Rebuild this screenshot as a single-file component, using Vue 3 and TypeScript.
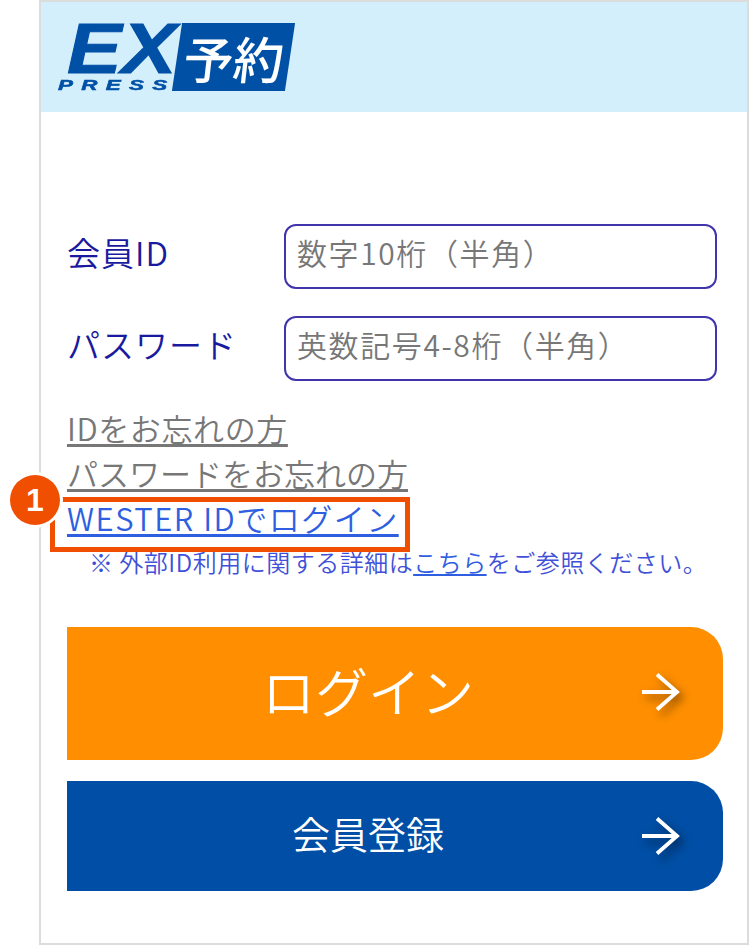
<script setup lang="ts">
// ログイン画面の入力欄
const fields = [
  { label: '会員ID', placeholder: '数字10桁（半角）' },
  { label: 'パスワード', placeholder: '英数記号4-8桁（半角）' },
]
</script>

<template>
  <div class="page">
    <div class="frame">
      <header class="header">
        <div class="logo">
          <div class="logo-ex">
            <span class="ex">EX</span>
            <span class="press">PRESS</span>
          </div>
          <div class="logo-plate"><span>予約</span></div>
        </div>
      </header>

      <main class="body">
        <div class="fields">
          <div v-for="f in fields" :key="f.label" class="field">
            <label class="label">{{ f.label }}</label>
            <input class="input" type="text" :placeholder="f.placeholder" />
          </div>
        </div>

        <div class="links">
          <a class="link gray id-link">IDをお忘れの方</a>
          <a class="link gray">パスワードをお忘れの方</a>
          <div class="wester">
            <a class="link blue">WESTER IDでログイン</a>
            <span class="highlight"></span>
            <span class="badge">1</span>
          </div>
          <p class="note">※ 外部ID利用に関する詳細は<a class="note-link">こちら</a>をご参照ください。</p>
        </div>

        <div class="buttons">
          <button class="btn login">
            <span>ログイン</span>
            <svg class="arrow" viewBox="0 0 40 40" fill="none">
              <path d="M0 20H36M15 2.5L35 20L15 37.5" stroke="#fff" stroke-width="3.8" />
            </svg>
          </button>
          <button class="btn register">
            <span>会員登録</span>
            <svg class="arrow" viewBox="0 0 40 40" fill="none">
              <path d="M0 20H36M15 2.5L35 20L15 37.5" stroke="#fff" stroke-width="3.8" />
            </svg>
          </button>
        </div>
      </main>
    </div>
  </div>
</template>

<style>
html,
body {
  margin: 0;
  background: #fff;
}
</style>

<style scoped>
.page {
  width: 750px;
  height: 946px;
  padding-left: 39px;
  box-sizing: border-box;
  font-family: "Noto Sans CJK JP", "Liberation Sans", sans-serif;
  overflow: hidden;
}

.frame {
  width: 710px;
  height: 945px;
  box-sizing: border-box;
  border: 2px solid #dcdcdc;
  background: #fff;
}

/* ヘッダー */
.header {
  height: 110px;
  background: #d4effc;
  padding: 21px 0 0 17px;
  box-sizing: border-box;
}

.logo {
  display: flex;
  height: 68px;
  color: #0050a6;
}

.logo-ex {
  width: 119px;
  height: 68px;
}

.ex {
  display: block;
  font: italic 700 70px/52px "Liberation Sans", sans-serif;
  -webkit-text-stroke: 1px #0050a6;
  transform: scaleX(1.17);
  transform-origin: left top;
  margin-left: 9px;
}

.press {
  display: block;
  margin-top: 3px;
  font: italic 700 14px/14px "Liberation Sans", sans-serif;
  letter-spacing: 5.2px;
  -webkit-text-stroke: 0.5px #0050a6;
  transform: scaleX(1.6);
  transform-origin: left top;
  white-space: nowrap;
}

.logo-plate {
  width: 113px;
  height: 68px;
  background: #0050a6;
  transform: skewX(-8.5deg);
  color: #fff;
  display: flex;
  align-items: center;
  justify-content: center;
}

.logo-plate span {
  font-size: 50px;
  line-height: 1;
  font-weight: 500;
  transform: skewX(2deg);
}

/* 本体 */
.body {
  padding: 112px 25px 0 26px;
}

.fields {
  display: flex;
  flex-direction: column;
  gap: 27px;
}

.field {
  display: flex;
  align-items: center;
}

.label {
  width: 217px;
  padding-bottom: 10px;
  font-size: 33px;
  font-weight: 350;
  letter-spacing: 1px;
  color: #1a1a9e;
}

.input {
  width: 433px;
  height: 65px;
  box-sizing: border-box;
  border: 2px solid #4035ad;
  border-radius: 12px;
  padding: 0 11px 10px;
  font-family: inherit;
  font-size: 30px;
  font-weight: 350;
  letter-spacing: 1.6px;
  outline: none;
}

.input::placeholder {
  color: #777;
  opacity: 1;
}

.links {
  margin-top: 24px;
  display: flex;
  flex-direction: column;
}

.link {
  font-size: 31px;
  font-weight: 350;
  line-height: 45px;
  text-decoration: underline;
  text-underline-offset: 3px;
  align-self: flex-start;
}

.id-link {
  letter-spacing: 0.6px;
}

.gray {
  color: #777;
}

.blue {
  color: #2f5fe0;
  letter-spacing: 1.5px;
}

.wester {
  position: relative;
  align-self: flex-start;
  display: flex;
}

.highlight {
  position: absolute;
  left: -17px;
  top: 2px;
  width: 360px;
  height: 55px;
  box-sizing: border-box;
  border: 5px solid #f04e00;
}

.badge {
  position: absolute;
  left: -57px;
  top: -20px;
  width: 50px;
  height: 50px;
  border-radius: 50%;
  background: #f04e00;
  box-shadow: 0 0 0 3px #fff;
  color: #fff;
  font: 700 32px/50px "Liberation Sans", sans-serif;
  text-align: center;
}

.note {
  margin: 4px 0 0 22px;
  font-size: 24px;
  font-weight: 350;
  line-height: 36px;
  letter-spacing: 0.5px;
  color: #3f51d8;
  white-space: nowrap;
}

.note-link {
  color: #2f5fe0;
  text-decoration: underline;
}

/* ボタン */
.buttons {
  margin-top: 47px;
  display: flex;
  flex-direction: column;
  gap: 21px;
}

.btn {
  position: relative;
  width: 656px;
  border: none;
  border-radius: 0 32px 32px 0;
  color: #fff;
  font-family: inherit;
  font-weight: 350;
  display: flex;
  align-items: center;
  justify-content: center;
  padding: 0 54px 8px 0;
}

.login {
  height: 133px;
  background: #ff8f00;
  font-size: 53px;
}

.register {
  height: 110px;
  background: #004ea5;
  font-size: 38px;
}

.arrow {
  position: absolute;
  right: 41px;
  top: 50%;
  width: 40px;
  height: 40px;
  margin-top: -20px;
  filter: drop-shadow(4px 5px 5px rgba(0, 0, 0, 0.45));
}

.login .arrow {
  margin-top: -22px;
}
</style>
